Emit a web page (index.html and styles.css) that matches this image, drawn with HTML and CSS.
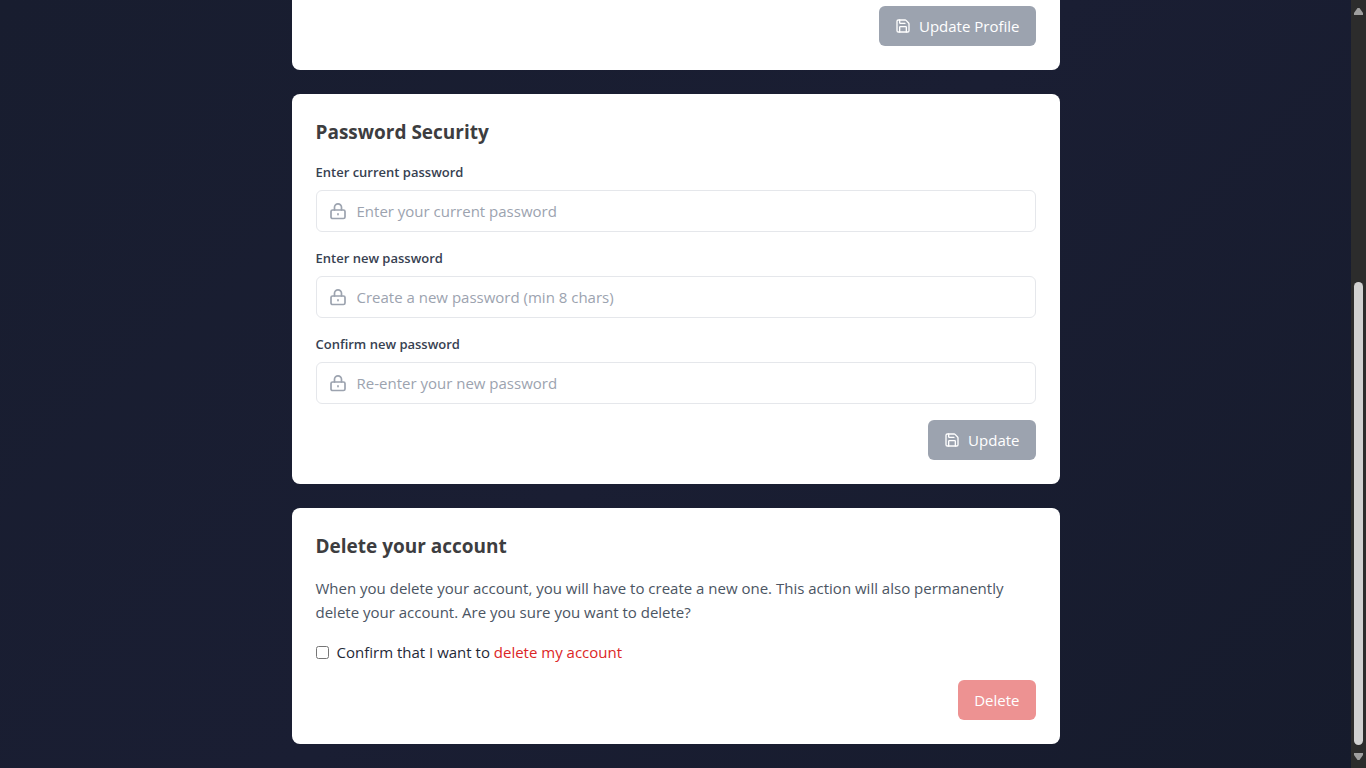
FILE: index.html
```html
<!DOCTYPE html>
<html lang="en">
<head>
  <meta charset="utf-8">
  <meta name="viewport" content="width=device-width, initial-scale=1">
  <title>Profile settings</title>
  <link rel="stylesheet" href="styles.css">
</head>
<body>
  <svg class="sprite" aria-hidden="true">
    <symbol id="icon-save" viewBox="0 0 24 24">
      <path d="M15.2 3a2 2 0 0 1 1.4.6l3.8 3.8a2 2 0 0 1 .6 1.4V19a2 2 0 0 1-2 2H5a2 2 0 0 1-2-2V5a2 2 0 0 1 2-2z"/>
      <path d="M17 21v-7a1 1 0 0 0-1-1H8a1 1 0 0 0-1 1v7"/>
      <path d="M7 3v4a1 1 0 0 0 1 1h7"/>
    </symbol>
    <symbol id="icon-lock" viewBox="0 0 20 20">
      <rect x="2" y="9" width="14" height="8.5" rx="1.6"/>
      <path d="M5.500 9V6.300a3.500 3.500 0 0 1 7 0V9"/>
      <path d="M9 12.800v.8"/>
    </symbol>
  </svg>
  <div class="page">
    <main class="content">
      <section class="card card-profile">
        <div class="actions">
          <button type="button" class="button"><svg class="icon-save" aria-hidden="true"><use href="#icon-save"/></svg>Update Profile</button>
        </div>
      </section>

      <form class="card">
        <h2 class="title">Password Security</h2>
        <div class="field">
          <label class="label" for="current">Enter current password</label>
          <div class="control">
            <svg class="icon-lock" aria-hidden="true"><use href="#icon-lock"/></svg>
            <input class="input" id="current" type="password" placeholder="Enter your current password">
          </div>
        </div>
        <div class="field">
          <label class="label" for="new">Enter new password</label>
          <div class="control">
            <svg class="icon-lock" aria-hidden="true"><use href="#icon-lock"/></svg>
            <input class="input" id="new" type="password" placeholder="Create a new password (min 8 chars)">
          </div>
        </div>
        <div class="field">
          <label class="label" for="confirm">Confirm new password</label>
          <div class="control">
            <svg class="icon-lock" aria-hidden="true"><use href="#icon-lock"/></svg>
            <input class="input" id="confirm" type="password" placeholder="Re-enter your new password">
          </div>
        </div>
        <div class="actions">
          <button type="button" class="button"><svg class="icon-save" aria-hidden="true"><use href="#icon-save"/></svg>Update</button>
        </div>
      </form>

      <section class="card">
        <h2 class="title">Delete your account</h2>
        <p class="text">When you delete your account, you will have to create a new one. This action will also permanently delete your account. Are you sure you want to delete?</p>
        <div class="check">
          <input class="checkbox" id="agree" type="checkbox">
          <label for="agree">Confirm that I want to <span class="danger">delete my account</span></label>
        </div>
        <div class="actions">
          <button type="button" class="button button-danger">Delete</button>
        </div>
      </section>
    </main>
    <div class="scrollbar" aria-hidden="true">
      <svg class="arrow" viewBox="0 0 9 7"><path d="M3.5 0h2L9 5v2H0V5z"/></svg>
      <div class="track"><div class="thumb"></div></div>
      <svg class="arrow" viewBox="0 0 9 7"><path d="M0 0h9v2L5.500 7h-2L0 2z"/></svg>
    </div>
  </div>
</body>
</html>
```

FILE: styles.css
```css
* {
  box-sizing: border-box;
}

body {
  margin: 0;
  font-family: "Open Sans", "Noto Sans", sans-serif;
  font-size: 15px;
  line-height: 24px;
  color: #1f2937;
}

.sprite {
  position: absolute;
  width: 0;
  height: 0;
}

.page {
  display: flex;
  min-height: 100vh;
  background: linear-gradient(135deg, #181d2f 0%, #1a1e33 50%, #161b2c 100%);
}

.content {
  flex: 1;
  display: flex;
  flex-direction: column;
  align-items: center;
  gap: 24px;
  padding-bottom: 24px;
}

.card {
  display: flex;
  flex-direction: column;
  gap: 16px;
  width: 100%;
  max-width: 768px;
  padding: 24px;
  border-radius: 8px;
  background: #fff;
}

.card-profile {
  padding-top: 6px;
  border-top-left-radius: 0;
  border-top-right-radius: 0;
}

.title {
  margin: 0;
  font-size: 19px;
  font-weight: 700;
  line-height: 28px;
  color: #3d3d40;
}

.field {
  display: flex;
  flex-direction: column;
  gap: 8px;
}

.label {
  font-size: 13px;
  font-weight: 600;
  line-height: 20px;
  color: #374151;
}

.control {
  display: flex;
  align-items: center;
  gap: 8px;
  height: 42px;
  padding: 0 12px;
  border: 1px solid #e5e7eb;
  border-radius: 6px;
}

.input {
  flex: 1;
  min-width: 0;
  padding: 0;
  border: 0;
  outline: 0;
  background: transparent;
  font: inherit;
  color: inherit;
}

.input::placeholder {
  color: #9ca3af;
  opacity: 1;
}

.icon-lock,
.icon-save {
  flex: none;
  fill: none;
  stroke-linecap: round;
  stroke-linejoin: round;
}

.icon-lock {
  width: 20px;
  height: 20px;
  stroke: #9ca3af;
  stroke-width: 1.7;
}

.icon-save {
  width: 16px;
  height: 16px;
  stroke: currentColor;
  stroke-width: 2;
}

.actions {
  display: flex;
  justify-content: flex-end;
}

.button {
  display: flex;
  align-items: center;
  gap: 8px;
  height: 40px;
  padding: 0 16px;
  border: 0;
  border-radius: 6px;
  background: #9ca3af;
  font: inherit;
  color: #fff;
}

.button-danger {
  background: #ed9292;
}

.text {
  margin: 0;
  color: #4b5563;
}

.check {
  display: flex;
  align-items: center;
  gap: 8px;
}

.checkbox {
  width: 13px;
  height: 13px;
  margin: 0;
}

.danger {
  color: #dc2626;
}

.scrollbar {
  display: flex;
  flex-direction: column;
  align-items: center;
  width: 15px;
  padding: 8px 0;
  background: #2c2c2c;
}

.arrow {
  width: 9px;
  height: 7px;
  fill: #9f9f9f;
}

.track {
  flex: 1;
  display: grid;
  grid-template-rows: 267fr 463fr;
  padding-bottom: 8px;
}

.thumb {
  grid-row: 2;
  width: 9px;
  border-radius: 5px;
  background: #d1d1d1;
}
```
